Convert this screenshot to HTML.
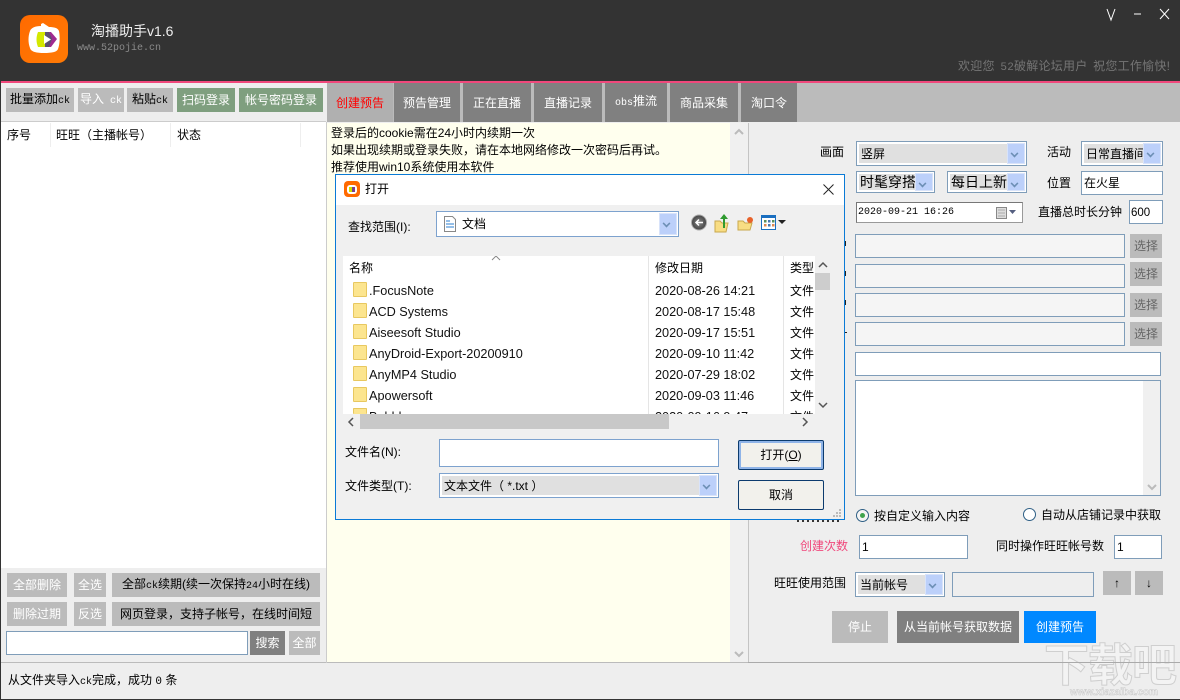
<!DOCTYPE html>
<html><head><meta charset="utf-8"><style>
html,body{margin:0;padding:0}
body{width:1180px;height:700px;overflow:hidden;position:relative;background:#eee;font:12px/16px "Liberation Sans","Noto Sans CJK SC",sans-serif;color:#000}
div,svg{position:absolute;box-sizing:border-box}
.t{white-space:nowrap}
.m{font-family:"Liberation Mono",monospace;font-size:10px}
.b{display:flex;align-items:center;justify-content:center;white-space:nowrap;background:#bbb}
.w{color:#fff}
.in{background:#fff;border:1px solid #7f9db9}
.g{background:#f5f5f5;border:1px solid #7f9db9}
.tab{top:83px;height:39px;background:#808080;color:#fff;display:flex;align-items:center;justify-content:center;white-space:nowrap}
.sel{background:#fff;border:1px solid #7f9db9}
.sel i{position:absolute;left:2px;top:2px;bottom:2px;right:19px;background:#e0e0e0;font-style:normal;display:flex;align-items:center;padding-left:2px;white-space:nowrap;overflow:hidden}
.sel u{position:absolute;right:1px;top:1px;bottom:1px;width:16px;background:#bcd0fa;border:1px solid #d8e3fa;text-decoration:none}
.sel u:after{content:"";position:absolute;left:3px;top:6px;width:5px;height:5px;border-right:2px solid #6d8fb5;border-bottom:2px solid #6d8fb5;transform:rotate(45deg) scale(.8)}
.d{font-size:12.7px;color:#111}
.f{left:353px;width:14px;height:15px;background:#fce58f;border:1px solid #e8c860;border-radius:1px}
</style></head><body>
<!-- title bar -->
<div style="left:0;top:0;width:1180px;height:81px;background:#333"></div>
<svg style="left:20px;top:15px" width="48" height="48" viewBox="0 0 48 48">
<defs><linearGradient id="o" x1="0" y1="0" x2="1" y2="1"><stop offset="0" stop-color="#ff6a00"/><stop offset="1" stop-color="#ff7a05"/></linearGradient></defs>
<rect width="48" height="48" rx="10" fill="url(#o)"/>
<path d="M21 9l2-1 6 4c5 0 9 1 10 4 1 5 1 13-1 18-1 3-6 4-14 4-7 0-13-1-14-5-2-5-2-12 0-17 1-3 5-5 11-5z" fill="#fff"/>
<path d="M18 17h7v15h-7c-2-5-2-10 0-15z" fill="#d4e800"/>
<path d="M25 17h6l6 7-6 8h-6z" fill="#a02a90"/>
<path d="M25 17h4l3 7-3 8h-4z" fill="#5a5070"/>
<path d="M24 20l7 4.500-7 4.500z" fill="#fff"/>
</svg>
<div class="t" style="left:91px;top:23px;color:#eee;font-size:14px">淘播助手v1.6</div>
<div class="t m" style="left:77px;top:41px;color:#8a8a8a;font-size:10px">www.52pojie.cn</div>
<svg style="left:1100px;top:5px" width="76" height="18" viewBox="0 0 76 18" fill="none" stroke="#fff" stroke-width="1"><path d="M7 4l4 11 4-11"/><path d="M34 9h7"/><path d="M60 4l9 10M69 4l-9 10"/></svg>
<div class="t" style="left:958px;top:58px;color:#757575;word-spacing:2px;letter-spacing:.25px">欢迎您 <span class="m" style="font-size:11px">52</span>破解论坛用户 祝您工作愉快!</div>
<div style="left:1px;top:81px;width:1179px;height:2px;background:#f0487c"></div>
<div style="left:0;top:81px;width:1px;height:619px;background:#333"></div>
<div style="left:0;top:699px;width:1180px;height:1px;background:#333"></div>

<!-- left panel -->
<div style="left:1px;top:83px;width:325px;height:39px;background:#eee;border-bottom:1px solid #ccc"></div>
<div class="b" style="left:6px;top:88px;width:68px;height:24px"><span>批量添加<span class="m">ck</span></span></div>
<div class="b w" style="left:78px;top:88px;width:46px;height:24px"><span>导入<span class="m">&nbsp;ck</span></span></div>
<div class="b" style="left:127px;top:88px;width:46px;height:24px"><span>粘贴<span class="m">ck</span></span></div>
<div class="b w" style="left:177px;top:88px;width:58px;height:24px;background:#7f9f7f">扫码登录</div>
<div class="b w" style="left:239px;top:88px;width:84px;height:24px;background:#7f9f7f">帐号密码登录</div>
<div style="left:1px;top:122px;width:325px;height:446px;background:#fff"></div>
<div class="t" style="left:7px;top:127px">序号</div>
<div class="t" style="left:56px;top:127px">旺旺（主播帐号）</div>
<div class="t" style="left:177px;top:127px">状态</div>
<div style="left:50px;top:123px;width:1px;height:24px;background:#eee"></div>
<div style="left:170px;top:123px;width:1px;height:24px;background:#eee"></div>
<div style="left:300px;top:123px;width:1px;height:24px;background:#eee"></div>
<div class="b w" style="left:7px;top:573px;width:60px;height:24px">全部删除</div>
<div class="b w" style="left:74px;top:573px;width:32px;height:24px">全选</div>
<div class="b" style="left:112px;top:573px;width:208px;height:24px"><span>全部<span class="m">ck</span>续期(续一次保持<span class="m">24</span>小时在线)</span></div>
<div class="b w" style="left:7px;top:602px;width:60px;height:24px">删除过期</div>
<div class="b w" style="left:74px;top:602px;width:32px;height:24px">反选</div>
<div class="b" style="left:112px;top:602px;width:208px;height:24px">网页登录，支持子帐号，在线时间短</div>
<div class="in" style="left:6px;top:631px;width:242px;height:24px"></div>
<div class="b w" style="left:250px;top:631px;width:35px;height:24px;background:#808080">搜索</div>
<div class="b w" style="left:289px;top:631px;width:31px;height:24px">全部</div>
<div style="left:1px;top:662px;width:1179px;height:1px;background:#bbb"></div>
<div class="t" style="left:8px;top:672px">从文件夹导入<span class="m">ck</span>完成，成功 <span class="m" style="font-size:11px">0</span> 条</div>

<!-- tabs -->
<div style="left:327px;top:83px;width:853px;height:39px;background:#bbb"></div>
<div class="tab" style="left:327px;width:66px;background:#b0b0b0;color:#f00">创建预告</div>
<div class="tab" style="left:394px;width:66px">预告管理</div>
<div class="tab" style="left:463px;width:68px">正在直播</div>
<div class="tab" style="left:534px;width:68px">直播记录</div>
<div class="tab" style="left:605px;width:62px"><span><span class="m">obs</span>推流</span></div>
<div class="tab" style="left:670px;width:68px">商品采集</div>
<div class="tab" style="left:741px;width:56px">淘口令</div>
<div style="left:326px;top:122px;width:1px;height:541px;background:#ccc"></div>
<!-- note -->
<div style="left:327px;top:123px;width:403px;height:539px;background:#ffffee"></div>
<div style="left:730px;top:123px;width:18px;height:539px;background:#f0f0f0"></div>
<div style="left:748px;top:123px;width:1px;height:539px;background:#c4c4c4"></div>
<div class="t" style="left:331px;top:125px;line-height:17px">登录后的cookie需在24小时内续期一次<br>如果出现续期或登录失败，请在本地网络修改一次密码后再试。<br>推荐使用win10系统使用本软件</div>
<svg style="left:733px;top:128px" width="12" height="8" fill="none" stroke="#bbb" stroke-width="2"><path d="M2 6l4-4 4 4"/></svg>
<svg style="left:733px;top:650px" width="12" height="8" fill="none" stroke="#bbb" stroke-width="2"><path d="M2 2l4 4 4-4"/></svg>

<!-- right form -->
<div class="t" style="left:820px;top:144px">画面</div>
<div class="sel" style="left:856px;top:141px;width:171px;height:25px"><i>竖屏</i><u></u></div>
<div class="t" style="left:1047px;top:144px">活动</div>
<div class="sel" style="left:1081px;top:141px;width:82px;height:25px"><i>日常直播间</i><u></u></div>
<div class="sel" style="left:856px;top:171px;width:79px;height:22px;font-size:14px"><i style="padding-left:1px">时髦穿搭</i><u></u></div>
<div class="sel" style="left:947px;top:171px;width:80px;height:22px;font-size:14px"><i style="padding-left:1px">每日上新</i><u></u></div>
<div class="t" style="left:1047px;top:175px">位置</div>
<div class="in" style="left:1081px;top:171px;width:82px;height:24px;padding:3px 0 0 2px">在火星</div>
<div style="left:856px;top:202px;width:167px;height:21px;background:#fff;border:1px solid #777;border-right-color:#999;border-bottom-color:#999"></div>
<div class="t m" style="left:858px;top:205px">2020-09-21 16:26</div>
<svg style="left:996px;top:207px" width="24" height="12"><rect x="0.5" y="0.5" width="10" height="11" fill="#ddd" stroke="#888"/><path d="M2 3h7M2 6h7M2 9h7" stroke="#aaa"/><path d="M13 3h7l-3.500 4z" fill="#555f80"/></svg>
<div class="t" style="left:1038px;top:204px">直播总时长分钟</div>
<div class="in" style="left:1129px;top:200px;width:34px;height:24px;padding:3px 0 0 1px"><span style="font-size:11.500px">600</span></div>
<div style="left:845px;top:241px;width:1px;height:5px;background:#222"></div>
<div style="left:845px;top:271px;width:1px;height:5px;background:#222"></div>
<div style="left:845px;top:300px;width:1px;height:5px;background:#222"></div>
<div style="left:845px;top:332px;width:2px;height:1px;background:#222"></div>
<div class="g" style="left:855px;top:234px;width:270px;height:24px"></div>
<div class="g" style="left:855px;top:264px;width:270px;height:24px"></div>
<div class="g" style="left:855px;top:293px;width:270px;height:24px"></div>
<div class="g" style="left:855px;top:322px;width:270px;height:24px"></div>
<div class="b" style="left:1130px;top:234px;width:32px;height:24px;color:#666">选择</div>
<div class="b" style="left:1130px;top:262px;width:32px;height:24px;color:#666">选择</div>
<div class="b" style="left:1130px;top:293px;width:32px;height:24px;color:#666">选择</div>
<div class="b" style="left:1130px;top:322px;width:32px;height:24px;color:#666">选择</div>
<div class="in" style="left:855px;top:352px;width:306px;height:24px"></div>
<div class="in" style="left:855px;top:380px;width:306px;height:116px"></div>
<div style="left:1143px;top:381px;width:17px;height:114px;background:#f0f0f0"></div>
<svg style="left:1146px;top:483px" width="12" height="8" fill="none" stroke="#bbb" stroke-width="2"><path d="M2 2l4 4 4-4"/></svg>
<svg style="left:855px;top:508px" width="15" height="15"><circle cx="7.500" cy="7.500" r="6" fill="#f4f4f4" stroke="#2e5f85"/><circle cx="7.500" cy="7.500" r="2.500" fill="#3fa34d"/></svg>
<div class="t" style="left:874px;top:508px">按自定义输入内容</div>
<svg style="left:1022px;top:507px" width="15" height="15"><circle cx="7.500" cy="7.500" r="6" fill="#fff" stroke="#2e5f85"/></svg>
<div class="t" style="left:1041px;top:507px">自动从店铺记录中获取</div>
<div class="t" style="left:800px;top:538px;color:#f0487c">创建次数</div>
<div class="in" style="left:859px;top:535px;width:109px;height:24px;padding:3px 0 0 2px">1</div>
<div class="t" style="left:996px;top:538px">同时操作旺旺帐号数</div>
<div class="in" style="left:1114px;top:535px;width:48px;height:24px;padding:3px 0 0 2px">1</div>
<div class="t" style="left:774px;top:575px">旺旺使用范围</div>
<div class="sel" style="left:855px;top:572px;width:90px;height:25px"><i>当前帐号</i><u></u></div>
<div class="g" style="left:952px;top:572px;width:142px;height:25px;background:#eee"></div>
<div class="b" style="left:1103px;top:571px;width:28px;height:24px">↑</div>
<div class="b" style="left:1135px;top:571px;width:28px;height:24px">↓</div>
<div class="b w" style="left:832px;top:611px;width:56px;height:32px">停止</div>
<div class="b w" style="left:897px;top:611px;width:122px;height:32px;background:#808080">从当前帐号获取数据</div>
<div class="b w" style="left:1024px;top:611px;width:72px;height:32px;background:#0088ff">创建预告</div>
<!-- watermark -->
<div class="t" style="left:1044px;top:641px;font-size:45px;line-height:50px;font-weight:bold;color:#f3f3f3;-webkit-text-stroke:1px #cfcfcf;letter-spacing:-1px">下载吧</div>
<div class="t" style="left:1070px;top:688px;font-size:10px;line-height:10px;font-weight:bold;color:#f3f3f3;-webkit-text-stroke:.5px #c8c8c8">www.xiazaiba.com</div>
<div style="left:748px;top:662px;width:432px;height:1px;background:#aaa"></div>

<!-- dialog -->
<div style="left:797px;top:520px;width:43px;height:2px;background:repeating-linear-gradient(90deg,#333 0 2px,transparent 2px 5px)"></div>
<div style="left:335px;top:174px;width:510px;height:346px;background:#f0f0f0;border:1px solid #0a7ad6"></div>
<div style="left:336px;top:175px;width:508px;height:30px;background:#fff"></div>
<svg style="left:344px;top:181px" width="16" height="16" viewBox="0 0 16 16"><rect width="16" height="16" rx="4" fill="#ff6a00"/><rect x="3" y="4" width="10" height="9" rx="3" fill="#fff"/><rect x="5" y="6" width="3" height="5" fill="#c8e000"/><rect x="8" y="6" width="3" height="5" fill="#7a3f8f"/></svg>
<div class="t" style="left:365px;top:181px">打开</div>
<svg style="left:822px;top:183px" width="13" height="13" fill="none" stroke="#222"><path d="M1.500 1.500l10 10M11.500 1.500l-10 10"/></svg>
<div class="t" style="left:348px;top:219px">查找范围(I):</div>
<div style="left:436px;top:211px;width:243px;height:26px;background:#fff;border:1px solid #7da2ce"></div>
<svg style="left:443px;top:216px" width="14" height="16"><path d="M1.500.5h8l3 3v12h-11z" fill="#fff" stroke="#888"/><path d="M3 5h4M3 8h8M3 11h8" stroke="#2b7fd1"/></svg>
<div class="t" style="left:462px;top:216px">文档</div>
<div class="sel" style="left:661px;top:212px;width:17px;height:24px;border:0;background:none"><u></u></div>
<svg style="left:690px;top:213px" width="100" height="20" viewBox="0 0 100 20">
<defs><radialGradient id="c"><stop offset="0" stop-color="#888"/><stop offset="1" stop-color="#444"/></radialGradient></defs>
<circle cx="9" cy="9.500" r="7.500" fill="url(#c)" stroke="#aaa"/><path d="M13 9.500H6M9 6.500l-3 3 3 3" fill="none" stroke="#fff" stroke-width="1.500"/>
<path d="M25 8h5l2 2h6l-2 9H25z" fill="#f8dd83" stroke="#c9a84d"/><path d="M33 15V6h-3l4-5 4 5h-3v9z" fill="#2f9a2f"/>
<path d="M48 8h5l2 2h7l-2 7H48z" fill="#f8dd83" stroke="#c9a84d"/><circle cx="60" cy="7" r="3" fill="#e8622a"/>
<rect x="71.500" y="2.500" width="14" height="14" fill="#fff" stroke="#1a6fc0"/><rect x="71" y="2" width="15" height="3" fill="#1a6fc0"/><rect x="74" y="7" width="2.500" height="2.500" fill="#5b8f5b"/><rect x="78" y="7" width="2.500" height="2.500" fill="#4a78b0"/><rect x="82" y="7" width="2.500" height="2.500" fill="#5b8f5b"/><rect x="74" y="11" width="2.500" height="2.500" fill="#e08a50"/><rect x="78" y="11" width="2.500" height="2.500" fill="#4a78b0"/><rect x="82" y="11" width="2.500" height="2.500" fill="#e08a50"/>
<path d="M88 7h8l-4 4z" fill="#222"/>
</svg>
<!-- list -->
<div style="left:343px;top:256px;width:472px;height:158px;background:#fff;overflow:hidden">
<div style="left:305px;top:0;width:1px;height:158px;background:#e5e5e5"></div>
<div style="left:440px;top:0;width:1px;height:158px;background:#e5e5e5"></div>
<div class="t" style="left:6px;top:4px">名称</div><div class="t" style="left:312px;top:4px">修改日期</div><div class="t" style="left:447px;top:4px">类型</div>
<svg style="left:148px;top:-1px" width="10" height="6" fill="none" stroke="#888"><path d="M1 5l4-4 4 4"/></svg>
<div class="t d" style="left:26px;top:27px">.FocusNote</div><div class="t d" style="left:312px;top:27px">2020-08-26 14:21</div><div class="t" style="left:447px;top:27px">文件</div>
<div class="t d" style="left:26px;top:48px">ACD Systems</div><div class="t d" style="left:312px;top:48px">2020-08-17 15:48</div><div class="t" style="left:447px;top:48px">文件</div>
<div class="t d" style="left:26px;top:69px">Aiseesoft Studio</div><div class="t d" style="left:312px;top:69px">2020-09-17 15:51</div><div class="t" style="left:447px;top:69px">文件</div>
<div class="t d" style="left:26px;top:90px">AnyDroid-Export-20200910</div><div class="t d" style="left:312px;top:90px">2020-09-10 11:42</div><div class="t" style="left:447px;top:90px">文件</div>
<div class="t d" style="left:26px;top:111px">AnyMP4 Studio</div><div class="t d" style="left:312px;top:111px">2020-07-29 18:02</div><div class="t" style="left:447px;top:111px">文件</div>
<div class="t d" style="left:26px;top:132px">Apowersoft</div><div class="t d" style="left:312px;top:132px">2020-09-03 11:46</div><div class="t" style="left:447px;top:132px">文件</div>
<div class="t d" style="left:26px;top:153px">Bubble</div><div class="t d" style="left:312px;top:153px">2020-09-16 9:47</div><div class="t" style="left:447px;top:153px">文件</div>
</div>
<div class="f" style="top:282px"></div><div class="f" style="top:303px"></div><div class="f" style="top:324px"></div><div class="f" style="top:345px"></div><div class="f" style="top:366px"></div><div class="f" style="top:387px"></div><div class="f" style="top:408px;height:6px;border-bottom:0"></div>
<div style="left:815px;top:273px;width:15px;height:17px;background:#cdcdcd"></div>
<svg style="left:817px;top:261px" width="12" height="8" fill="none" stroke="#555" stroke-width="1.500"><path d="M2 6l4-4 4 4"/></svg>
<svg style="left:817px;top:401px" width="12" height="8" fill="none" stroke="#555" stroke-width="1.500"><path d="M2 2l4 4 4-4"/></svg>
<div style="left:360px;top:414px;width:309px;height:15px;background:#c8c8c8"></div>
<svg style="left:347px;top:416px" width="8" height="12" fill="none" stroke="#555" stroke-width="1.500"><path d="M6 2L2 6l4 4"/></svg>
<svg style="left:801px;top:416px" width="8" height="12" fill="none" stroke="#555" stroke-width="1.500"><path d="M2 2l4 4-4 4"/></svg>
<div class="t" style="left:345px;top:444px">文件名(N):</div>
<div class="in" style="left:439px;top:439px;width:280px;height:28px;border-color:#7da2ce"></div>
<div class="t" style="left:345px;top:478px">文件类型(T):</div>
<div class="sel" style="left:439px;top:473px;width:280px;height:25px;border-color:#7da2ce"><i style="padding-left:2px">文本文件（ *.txt ）</i><u></u></div>
<div class="b" style="left:738px;top:440px;width:86px;height:30px;background:#f2f1ec;border:1px solid #0c3b6e;border-radius:2px;box-shadow:inset 0 0 0 2px #8fb4e8"><span>打开(<span style="text-decoration:underline">O</span>)</span></div>
<div class="b" style="left:738px;top:480px;width:86px;height:30px;background:#f2f1ec;border:1px solid #0c3b6e;border-radius:2px">取消</div>
<svg style="left:832px;top:508px" width="10" height="10" fill="#bbb"><rect x="7" y="1" width="2" height="2"/><rect x="4" y="4" width="2" height="2"/><rect x="7" y="4" width="2" height="2"/><rect x="1" y="7" width="2" height="2"/><rect x="4" y="7" width="2" height="2"/><rect x="7" y="7" width="2" height="2"/></svg>
</body></html>
